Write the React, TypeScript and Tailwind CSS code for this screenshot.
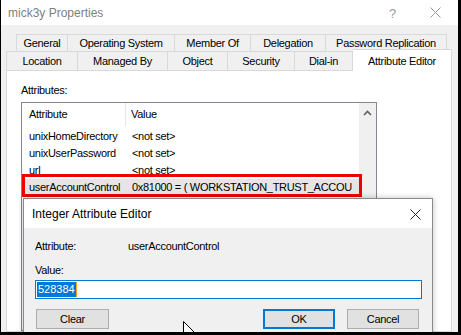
import React from 'react';

const topTabs = [
    { label: 'General', w: 'w-[52px]' },
    { label: 'Operating System', w: 'w-[107px]' },
    { label: 'Member Of', w: 'w-[76px]' },
    { label: 'Delegation', w: 'w-[75px]' },
    { label: 'Password Replication', w: 'w-[121px]' },
];

const bottomTabs = [
    { label: 'Location', w: 'w-[72px]' },
    { label: 'Managed By', w: 'w-[90px]' },
    { label: 'Object', w: 'w-[60px]' },
    { label: 'Security', w: 'w-[67px]' },
    { label: 'Dial-in', w: 'w-[58px]' },
];

const rows = [
    { name: 'unixHomeDirectory', value: '<not set>' },
    { name: 'unixUserPassword', value: '<not set>' },
    { name: 'url', value: '<not set>' },
    { name: 'userAccountControl', value: '0x81000 = ( WORKSTATION_TRUST_ACCOU', selected: true },
];

const App: React.FC = () => {
    return (
        <div className="w-[461px] h-[335px] bg-black pl-px pr-[3px] pb-[3px] font-['Liberation_Sans',Arial,sans-serif] text-[11px] tracking-[-0.3px] text-black">
            <div className="relative w-full h-full bg-[#f0f0f0] overflow-hidden flex flex-col">
                {/* title bar */}
                <div className="h-[25px] shrink-0 bg-white flex items-center pl-[7px] relative">
                    <span className="text-[12px] tracking-normal text-[#808080]">mick3y Properties</span>
                    <span className="absolute left-[388px] top-[4px] text-[13px] tracking-normal text-[#999]">?</span>
                    <svg className="absolute left-[429px] top-[7px]" width="11" height="11" viewBox="0 0 11 11">
                        <path d="M0.5 0.5 L10.5 10.5 M10.5 0.5 L0.5 10.5" stroke="#999" strokeWidth="1" />
                    </svg>
                </div>

                {/* tabs */}
                <div className="pt-[9px] flex flex-col shrink-0">
                    <div className="flex ml-[15px] h-[17px]">
                        {topTabs.map((t, i) => (
                            <div
                                key={t.label}
                                className={`${t.w} h-full flex items-center justify-center border-t border-[#d9d9d9] ${i === 0 ? 'border-l' : ''} border-r`}
                            >
                                {t.label}
                            </div>
                        ))}
                    </div>
                    <div className="flex ml-[5px] h-[19px] items-end">
                        {bottomTabs.map((t, i) => (
                            <div
                                key={t.label}
                                className={`${t.w} h-[19px] flex items-center justify-center border-t border-[#d9d9d9] ${i === 0 ? 'border-l' : ''} border-r pt-px`}
                            >
                                {t.label}
                            </div>
                        ))}
                        <div className="w-[99px] h-[22px] -mb-px relative z-10 bg-white border border-b-0 border-l-0 border-[#d9d9d9] flex items-start justify-center pt-[3px]">
                            Attribute Editor
                        </div>
                    </div>
                </div>

                {/* page */}
                <div className="flex-1 ml-[5px] mr-[6px] bg-white border border-[#d9d9d9] flex flex-col pl-[14px] pt-[13px]">
                    <div className="leading-[13px]">Attributes:</div>
                    <div className="mt-[5px] w-[356px] flex-1 border border-[#828790] flex">
                        <div className="flex-1 flex flex-col overflow-hidden">
                            <div className="h-[23px] shrink-0 flex items-center">
                                <div className="w-[104px] h-full pl-[7px] flex items-center border-r border-[#e5e5e5]">Attribute</div>
                                <div className="pl-[5px]">Value</div>
                            </div>
                            <div className="pt-[2px]">
                                {rows.map((r) => (
                                    <div
                                        key={r.name}
                                        className={`h-[17px] flex items-center whitespace-nowrap ${r.selected ? 'bg-[#e5e5e5]' : ''}`}
                                    >
                                        <div className="w-[104px] pl-[7px] shrink-0">{r.name}</div>
                                        <div className="pl-[6px]">{r.value}</div>
                                    </div>
                                ))}
                            </div>
                        </div>
                        <div className="w-[17px] shrink-0 bg-[#f0f0f0] flex justify-center pt-[7px]">
                            <svg width="9" height="6" viewBox="0 0 9 6">
                                <path d="M1 5 L4.5 1.5 L8 5" stroke="#606060" strokeWidth="1.6" fill="none" />
                            </svg>
                        </div>
                    </div>
                </div>

                {/* red annotation */}
                <div className="absolute left-[21px] top-[174px] w-[340px] h-[23px] border-[3px] border-[#f00000]" />

                {/* Integer Attribute Editor dialog */}
                <div className="absolute left-[22px] top-[198px] w-[410px] h-[150px] bg-[#f0f0f0] border border-[#8a8a8a] shadow-[0_0_6px_rgba(0,0,0,0.25)] flex flex-col">
                    <div className="h-[29px] shrink-0 bg-white flex items-center pl-[8px] relative">
                        <span className="text-[12px] tracking-normal">Integer Attribute Editor</span>
                        <svg className="absolute left-[386px] top-[10px]" width="11" height="11" viewBox="0 0 11 11">
                            <path d="M0.5 0.5 L10.5 10.5 M10.5 0.5 L0.5 10.5" stroke="#222" strokeWidth="1" />
                        </svg>
                    </div>
                    <div className="pl-[11px] pr-[10px] pt-[12px] flex flex-col">
                        <div className="flex leading-[13px]">
                            <span className="w-[93px]">Attribute:</span>
                            <span>userAccountControl</span>
                        </div>
                        <div className="mt-[11px] leading-[13px]">Value:</div>
                        <div className="mt-[3px] h-[19px] bg-white border border-[#0078d7] flex items-center pl-px">
                            <span className="bg-[#0078d7] text-white px-[1px] leading-[15px] tracking-normal">528384</span>
                            <span className="w-px h-[15px] bg-[#f7a11a]" />
                        </div>
                        <div className="mt-[10px] flex justify-between pl-px pr-[3px]">
                            <div className="w-[73px] h-[20px] bg-[#e1e1e1] border border-[#adadad] flex items-center justify-center">Clear</div>
                            <div className="flex gap-[12px]">
                                <div className="w-[72px] h-[20px] bg-[#e1e1e1] border-2 border-[#0078d7] flex items-center justify-center">OK</div>
                                <div className="w-[72px] h-[20px] bg-[#e1e1e1] border border-[#adadad] flex items-center justify-center">Cancel</div>
                            </div>
                        </div>
                    </div>
                </div>

                {/* mouse pointer */}
                <svg className="absolute left-[182px] top-[321px]" width="14" height="20" viewBox="0 0 14 20">
                    <path d="M0.5 0.5 L0.5 16 L4 12.5 L6.5 18 L9 17 L6.5 11.5 L11.5 11.5 Z" fill="white" stroke="black" strokeWidth="1" strokeLinejoin="miter" />
                </svg>
            </div>
        </div>
    );
};

export default App;
